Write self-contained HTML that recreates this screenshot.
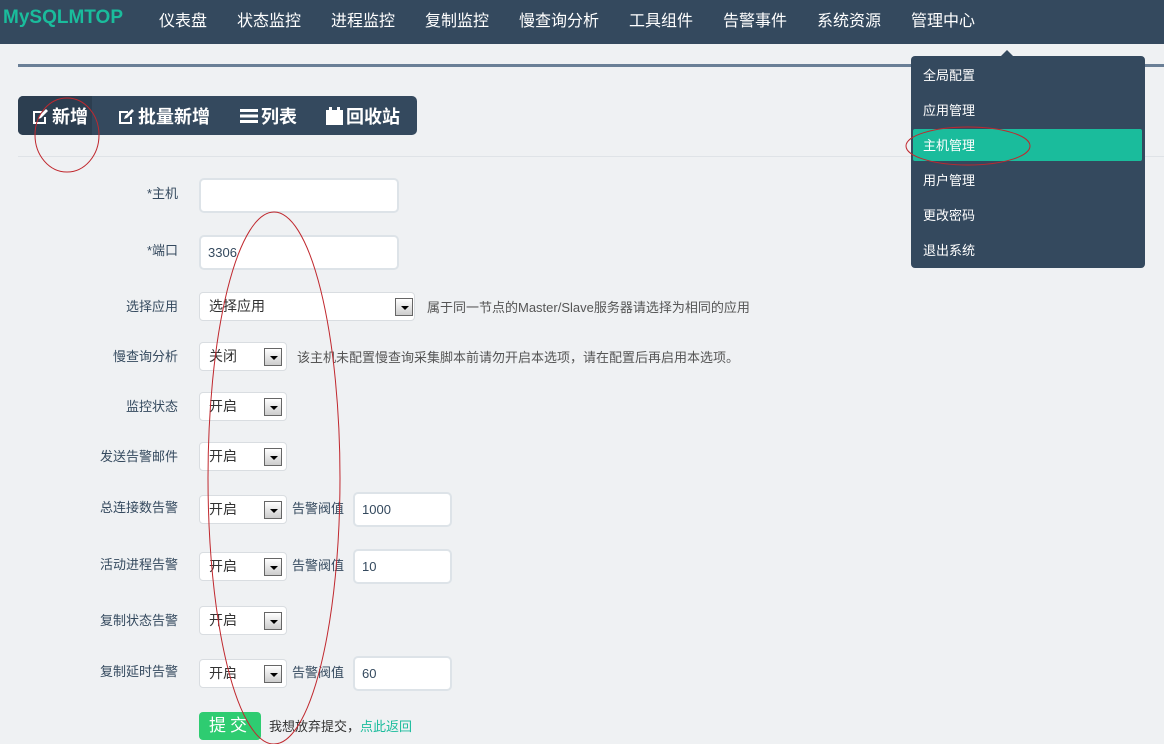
<!DOCTYPE html>
<html><head><meta charset="utf-8"><style>
*{margin:0;padding:0;box-sizing:border-box}
body{width:1164px;height:744px;overflow:hidden;background:#eff1f3;font-family:"Liberation Sans","Noto Sans CJK SC",sans-serif;position:relative;color:#34495e}
.a{position:absolute}
.nav{left:0;top:0;width:1164px;height:44px;background:#34495e}
.nav span{position:absolute;top:7px;color:#fff;font-size:16px}
.logo{color:#1abc9c!important;font-weight:bold;font-size:19px!important;left:3px;top:7px!important}
.lbl{font-size:13px;color:#34495e;text-align:right;width:180px;left:0}
.inp{background:#fff;border:2px solid #dde3e8;border-radius:5px;font-size:13px;color:#34495e;padding-left:7px}
.sel{background:#fff;border:1px solid #d9dde1;border-radius:4px;font-size:14px;color:#333;padding-left:9px;height:29px;line-height:27px}
.arr{position:absolute;top:5px;width:18px;height:18px;border:1px solid #666;background:linear-gradient(#fff,#ccc)}
.arr:after{content:"";position:absolute;left:5px;top:7px;border:4px solid transparent;border-top:4px solid #000}
.dd{left:911px;top:56px;width:234px;height:212px;background:#34495e;border-radius:4px}
.dd div{position:absolute;left:12px;color:#fff;font-size:13px}
.tab{position:absolute;top:7px;color:#fff;font-size:18px;font-weight:bold;display:flex;align-items:center;gap:3px}
</style></head><body>
<div class="a nav">
<span class="logo">MySQLMTOP</span>
<span style="left:159px">仪表盘</span><span style="left:237px">状态监控</span><span style="left:331px">进程监控</span><span style="left:425px">复制监控</span><span style="left:519px">慢查询分析</span><span style="left:629px">工具组件</span><span style="left:723px">告警事件</span><span style="left:817px">系统资源</span><span style="left:911px">管理中心</span>
</div>
<div class="a" style="left:18px;top:64px;width:1146px;height:3px;background:#6a7f96"></div>
<div class="a" style="left:18px;top:156px;width:1146px;height:1px;background:#dfe3e7"></div>
<div class="a" style="left:18px;top:96px;width:399px;height:39px;background:#34495e;border-radius:5px;overflow:hidden">
<div class="a" style="left:0;top:0;width:74px;height:39px;background:#2c3e50"></div>
<div class="tab" style="left:14px"><svg width="17" height="17" viewBox="0 0 17 17"><path d="M1 3h9v2H3v9h9V9h2v7H1z" fill="#fff"/><path d="M6 11l1-3 7-7 2 2-7 7z" fill="#fff"/></svg>新增</div>
<div class="tab" style="left:100px"><svg width="17" height="17" viewBox="0 0 17 17"><path d="M1 3h9v2H3v9h9V9h2v7H1z" fill="#fff"/><path d="M6 11l1-3 7-7 2 2-7 7z" fill="#fff"/></svg>批量新增</div>
<div class="tab" style="left:222px"><svg width="18" height="16" viewBox="0 0 18 16"><rect y="1" width="18" height="3" fill="#fff"/><rect y="6.5" width="18" height="3" fill="#fff"/><rect y="12" width="18" height="3" fill="#fff"/></svg>列表</div>
<div class="tab" style="left:308px"><svg width="17" height="18" viewBox="0 0 17 18"><rect x="0" y="3" width="17" height="15" fill="#fff"/><rect x="3" y="0" width="3" height="5" fill="#fff"/><rect x="11" y="0" width="3" height="5" fill="#fff"/></svg>回收站</div>
</div>
<div class="a lbl" style="top:183px;width:178px">*主机</div>
<div class="a inp" style="left:199px;top:178px;width:200px;height:35px"></div>
<div class="a lbl" style="top:240px;width:178px">*端口</div>
<div class="a inp" style="left:199px;top:235px;width:200px;height:35px;line-height:31px">3306</div>
<div class="a lbl" style="top:296px;width:178px">选择应用</div>
<div class="a sel" style="left:199px;top:292px;width:216px">选择应用<div class="arr" style="left:195px"></div></div>
<div class="a" style="left:427px;top:297px;font-size:13px;color:#555">属于同一节点的Master/Slave服务器请选择为相同的应用</div>
<div class="a lbl" style="top:346px;width:178px">慢查询分析</div>
<div class="a sel" style="left:199px;top:342px;width:88px">关闭<div class="arr" style="left:64px"></div></div>
<div class="a" style="left:297px;top:347px;font-size:13px;color:#555">该主机未配置慢查询采集脚本前请勿开启本选项，请在配置后再启用本选项。</div>
<div class="a lbl" style="top:396px;width:178px">监控状态</div>
<div class="a sel" style="left:199px;top:392px;width:88px">开启<div class="arr" style="left:64px"></div></div>
<div class="a lbl" style="top:446px;width:178px">发送告警邮件</div>
<div class="a sel" style="left:199px;top:442px;width:88px">开启<div class="arr" style="left:64px"></div></div>
<div class="a lbl" style="top:497px;width:178px">总连接数告警</div>
<div class="a sel" style="left:199px;top:495px;width:88px">开启<div class="arr" style="left:64px"></div></div>
<div class="a" style="left:292px;top:498px;font-size:13px">告警阀值</div>
<div class="a inp" style="left:353px;top:492px;width:99px;height:35px;line-height:31px">1000</div>
<div class="a lbl" style="top:554px;width:178px">活动进程告警</div>
<div class="a sel" style="left:199px;top:552px;width:88px">开启<div class="arr" style="left:64px"></div></div>
<div class="a" style="left:292px;top:555px;font-size:13px">告警阀值</div>
<div class="a inp" style="left:353px;top:549px;width:99px;height:35px;line-height:31px">10</div>
<div class="a lbl" style="top:610px;width:178px">复制状态告警</div>
<div class="a sel" style="left:199px;top:606px;width:88px">开启<div class="arr" style="left:64px"></div></div>
<div class="a lbl" style="top:661px;width:178px">复制延时告警</div>
<div class="a sel" style="left:199px;top:659px;width:88px">开启<div class="arr" style="left:64px"></div></div>
<div class="a" style="left:292px;top:662px;font-size:13px">告警阀值</div>
<div class="a inp" style="left:353px;top:656px;width:99px;height:35px;line-height:31px">60</div>
<div class="a" style="left:199px;top:712px;width:62px;height:28px;background:#2ecc71;border-radius:4px;color:#fff;font-size:17px;text-align:center;line-height:28px;letter-spacing:4px">提交</div>
<div class="a" style="left:269px;top:716px;font-size:13px;color:#333">我想放弃提交，<span style="color:#1abc9c">点此返回</span></div>
<div class="a dd">
<div style="left:90px;top:-6px;width:0;height:0;border:6px solid transparent;border-top:0;border-bottom:6px solid #34495e;position:absolute"></div>
<div style="top:9px">全局配置</div>
<div style="top:44px">应用管理</div>
<div style="left:2px;top:73px;width:229px;height:32px;background:#1abc9c;border-radius:2px"></div>
<div style="top:79px">主机管理</div>
<div style="top:114px">用户管理</div>
<div style="top:149px">更改密码</div>
<div style="top:184px">退出系统</div>
</div>
<svg class="a" style="left:0;top:0" width="1164" height="744"><g fill="none" stroke="#c0282e" stroke-width="1">
<ellipse cx="67" cy="135" rx="32" ry="37"/>
<ellipse cx="274" cy="478" rx="66" ry="266"/>
<ellipse cx="968" cy="146" rx="62" ry="19"/></g></svg>
</body></html>
